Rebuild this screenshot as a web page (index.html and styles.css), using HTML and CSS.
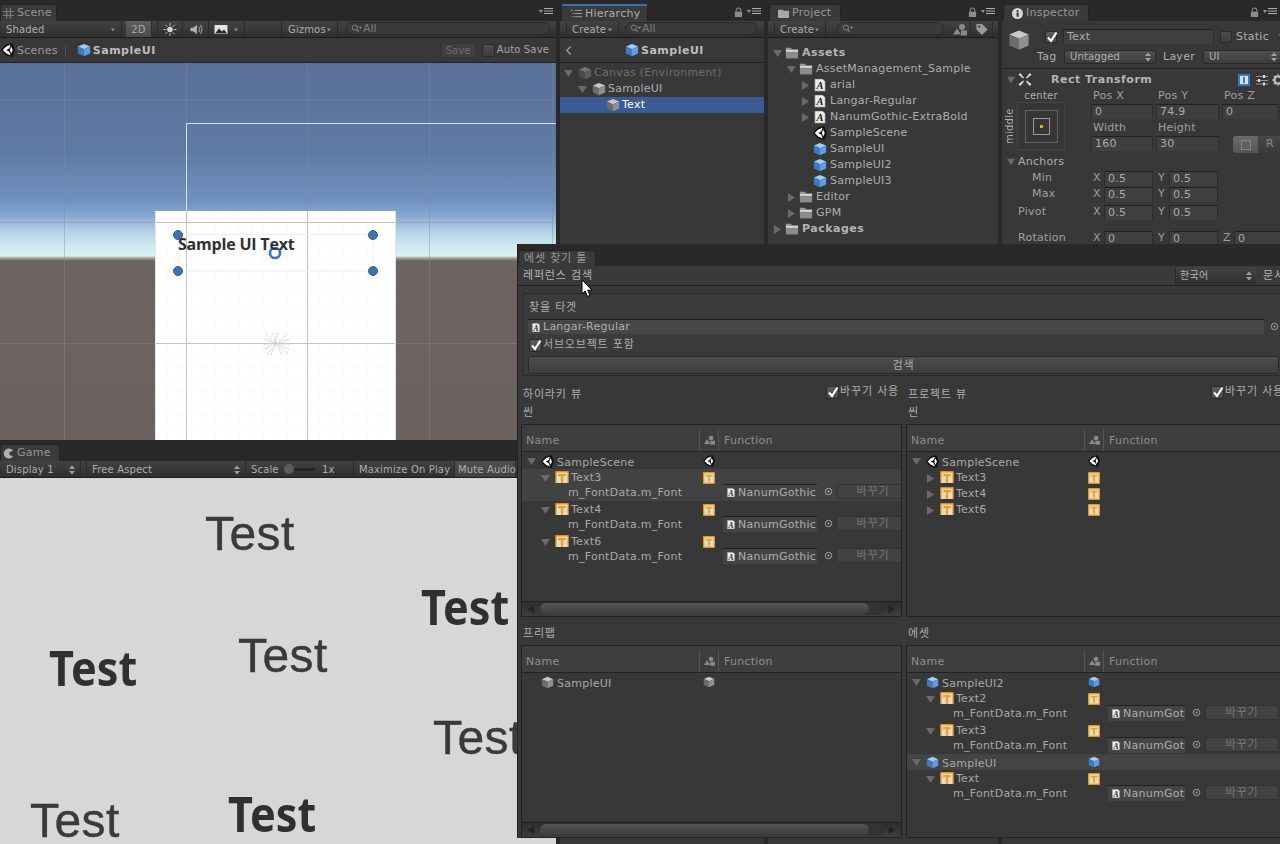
FILE: index.html
```html
<!DOCTYPE html>
<html lang="ko">
<head>
<meta charset="utf-8">
<title>Unity Editor</title>
<link rel="stylesheet" href="styles.css">
</head>
<body>
<svg class="sprite" aria-hidden="true">
  <defs>
    <symbol id="cube-blue" viewBox="0 0 16 16"><polygon points="8,1 15,4 8,7 1,4" fill="#a4cdf2"/><polygon points="1,4 8,7 8,15 1,12" fill="#3d7ac4"/><polygon points="8,7 15,4 15,12 8,15" fill="#5f9ce2"/></symbol>
    <symbol id="cube-grey" viewBox="0 0 16 16"><polygon points="8,1 15,4 8,7 1,4" fill="#c8c8c8"/><polygon points="1,4 8,7 8,15 1,12" fill="#6c6c6c"/><polygon points="8,7 15,4 15,12 8,15" fill="#909090"/></symbol>
    <symbol id="cube-dim" viewBox="0 0 16 16"><polygon points="8,1 15,4 8,7 1,4" fill="#757575"/><polygon points="1,4 8,7 8,15 1,12" fill="#4a4a4a"/><polygon points="8,7 15,4 15,12 8,15" fill="#5c5c5c"/></symbol>
    <symbol id="unity" viewBox="0 0 16 16"><polygon points="0,8 5,2 13,0 16,8 13,16 5,14" fill="#111"/><polygon points="2,8 6,4 11,2 9.5,6 6,8 9.5,10 11,14 6,12" fill="#fff"/><polygon points="11.5,4 13.5,8 11.5,12 10.5,9 10.5,7" fill="#fff"/></symbol>
    <symbol id="t" viewBox="0 0 16 16"><rect x="1" y="1" width="14" height="14" fill="#dcdcdc" stroke="#f5a20f" stroke-width="1.6"/><polygon points="3.5,3.5 12.5,3.5 12.5,6 9.3,6 9.3,13 6.7,13 6.7,6 3.5,6" fill="#f5a20f"/></symbol>
    <symbol id="t-cut" viewBox="0 0 16 14"><rect x="1" y="1" width="14" height="15" fill="#dcdcdc" stroke="#f5a20f" stroke-width="1.6"/><polygon points="3.5,3.5 12.5,3.5 12.5,6 9.3,6 9.3,14 6.7,14 6.7,6 3.5,6" fill="#f5a20f"/></symbol>
    <symbol id="font" viewBox="0 0 16 16"><polygon points="2,1 11,1 14,4 14,15 2,15" fill="#ececec" stroke="#555" stroke-width=".6"/><text x="8" y="13" text-anchor="middle" font-family="Liberation Serif" font-style="italic" font-weight="bold" font-size="12" fill="#222">A</text></symbol>
    <symbol id="folder" viewBox="0 0 16 16"><polygon points="1,4 1,2 7,2 8,4" fill="#9a9a9a"/><rect x="1" y="4" width="14" height="3" fill="#d0d0d0"/><rect x="1" y="7" width="14" height="7" fill="#8c8c8c"/><rect x="1" y="14" width="14" height="1" fill="#5c5c5c"/></symbol>
    <symbol id="down" viewBox="0 0 10 10"><polygon points="0,1 10,1 5,9" fill="currentColor"/></symbol>
    <symbol id="right" viewBox="0 0 10 10"><polygon points="1,0 9,5 1,10" fill="currentColor"/></symbol>
    <symbol id="lock" viewBox="0 0 10 12"><rect x="1" y="5" width="8" height="6" fill="#8c8c8c"/><path d="M2.5 5V3.5a2.5 2.5 0 0 1 5 0V5" fill="none" stroke="#8c8c8c" stroke-width="1.2"/></symbol>
    <symbol id="menu" viewBox="0 0 14 8"><polygon points="0,3 4,3 2,6" fill="#9a9a9a"/><rect x="5" y="1" width="9" height="1" fill="#b0b0b0"/><rect x="5" y="3.5" width="9" height="1" fill="#b0b0b0"/><rect x="5" y="6" width="9" height="1" fill="#b0b0b0"/></symbol>
    <symbol id="check" viewBox="0 0 12 12"><path d="M2 6.5 5 10 10.5 1.5" fill="none" stroke="#fff" stroke-width="2.2"/></symbol>
    <symbol id="updown" viewBox="0 0 6 10"><polygon points="0,4 6,4 3,0.5" fill="#a0a0a0"/><polygon points="0,6 6,6 3,9.5" fill="#a0a0a0"/></symbol>
    <symbol id="target" viewBox="0 0 10 10"><circle cx="5" cy="5" r="3.6" fill="none" stroke="#aaa"/><circle cx="5" cy="5" r="1.1" fill="#aaa"/></symbol>
    <symbol id="mag" viewBox="0 0 14 10"><circle cx="4.5" cy="4" r="3" fill="none" stroke="#8a8a8a" stroke-width="1.1"/><path d="M6.5 6 9 9" stroke="#8a8a8a" stroke-width="1.2"/><polygon points="9,3 13,3 11,6" fill="#8a8a8a"/></symbol>
    <symbol id="person" viewBox="0 0 14 12"><circle cx="9" cy="3.5" r="3" fill="#8a8a8a"/><polygon points="0,11 4,5 8,11" fill="#8a8a8a"/><rect x="8" y="7" width="6" height="5" fill="#8a8a8a"/></symbol>
    <symbol id="tag" viewBox="0 0 14 14"><polygon points="1,1 7,1 13,7 7,13 1,7" fill="#9a9a9a"/><circle cx="4" cy="4" r="1.2" fill="#383838"/></symbol>
  </defs>
</svg>

<div class="editor">
  <div class="col-left">
    <section class="scene">
      <div class="tabbar">
        <div class="tab tab-scene">
          <svg class="tab-ico" viewBox="0 0 12 12"><path d="M4 0V12M8 0V12M0 4H12M0 8H12" stroke="#8a8a8a" fill="none"/></svg>
          <span>Scene</span>
        </div>
        <svg class="ico-menu"><use href="#menu"/></svg>
      </div>
      <div class="toolbar">
        <div class="tb-cell w-shaded"><span>Shaded</span><svg class="mini-down"><use href="#down"/></svg></div>
        <div class="tb-cell w-2d">2D</div>
        <div class="tb-cell w-sun">
          <svg class="tb-ico" viewBox="0 0 14 14"><circle cx="7" cy="7" r="3" fill="#d8d8d8"/><path d="M7 0V3M7 11V14M0 7H3M11 7H14M2 2 4 4M10 10 12 12M2 12 4 10M10 4 12 2" stroke="#c8c8c8"/></svg>
        </div>
        <div class="tb-cell w-audio">
          <svg class="tb-ico" viewBox="0 0 14 14"><polygon points="1,5 4,5 8,2 8,12 4,9 1,9" fill="#b0b0b0"/><path d="M10 4Q12 7 10 10M12 2Q15 7 12 12" stroke="#b0b0b0" fill="none"/></svg>
        </div>
        <div class="tb-cell w-image">
          <svg class="tb-ico" viewBox="0 0 14 12"><rect x="0.5" y="1.5" width="13" height="9" fill="#e4e4e4"/><polygon points="1,10 5,5 8,8 10,6 13,10" fill="#2a2a2a"/></svg>
          <svg class="mini-down"><use href="#down"/></svg>
        </div>
        <div class="tb-cell w-blank"></div>
        <div class="tb-cell w-gizmos"><span>Gizmos</span><svg class="mini-down"><use href="#down"/></svg></div>
        <div class="pill pill-scene"><svg class="mag"><use href="#mag"/></svg><span>All</span></div>
      </div>
      <div class="crumbs">
        <svg class="ico"><use href="#unity"/></svg>
        <span class="crumb-scenes">Scenes</span>
        <span class="crumb-sep"></span>
        <svg class="ico"><use href="#cube-blue"/></svg>
        <strong class="crumb-name">SampleUI</strong>
        <button class="btn-save">Save</button>
        <span class="cb cb-empty"></span>
        <span class="crumb-auto">Auto Save</span>
      </div>
      <div class="viewport">
        <svg class="viewport-art" width="556" height="377" viewBox="0 63 556 377">
          <defs>
            <linearGradient id="sky" x1="0" y1="63" x2="0" y2="440" gradientUnits="userSpaceOnUse">
              <stop offset="0" stop-color="#5a7097"/>
              <stop offset=".23" stop-color="#5e7aa4"/>
              <stop offset=".363" stop-color="#7091bf"/>
              <stop offset=".403" stop-color="#84a6d0"/>
              <stop offset=".448" stop-color="#b6d3e6"/>
              <stop offset=".49" stop-color="#d0ebf0"/>
              <stop offset=".512" stop-color="#d9f1f2"/>
              <stop offset=".517" stop-color="#a8a49c"/>
              <stop offset=".525" stop-color="#6c6460"/>
              <stop offset="1" stop-color="#6a625e"/>
            </linearGradient>
          </defs>
          <rect x="0" y="63" width="556" height="377" fill="url(#sky)"/>
          <g stroke="#8a8a8a" stroke-opacity=".42">
            <path d="M64.5 63V440M186.5 63V123M307.5 63V440M429.5 63V440M552.5 63V440M0 100.5H556M0 222.5H556M0 343.5H556"/>
          </g>
          <path d="M186.5 211V123.5H556" fill="none" stroke="#d7dfea"/>
          <rect x="155" y="211" width="241" height="229" fill="#fff"/>
          <path d="M167.5 211V440M179.5 211V440M191.5 211V440M203.5 211V440M215.5 211V440M227.5 211V440M239.5 211V440M251.5 211V440M263.5 211V440M275.5 211V440M287.5 211V440M319.5 211V440M331.5 211V440M343.5 211V440M355.5 211V440M367.5 211V440M379.5 211V440M155 246.5H396M155 258.5H396M155 270.5H396M155 282.5H396M155 294.5H396M155 306.5H396M155 318.5H396M155 330.5H396M155 355.5H396M155 367.5H396M155 379.5H396M155 391.5H396M155 403.5H396M155 415.5H396M155 427.5H396" stroke="#fafafa"/>
          <path d="M186.5 211V440M307.5 211V440M155 222.5H396M155 343.5H396" stroke="#c4c4c4"/>
          <path d="M155.5 211V440M395.5 211V440" stroke="#e4e4e4"/>
          <path d="M178 234.5H373M178 271H373M178 235V271M373 235V271" stroke="#f0f0f0"/>
          <g stroke="#cfcfcf" stroke-dasharray="2 1" fill="none">
            <path d="M266 334 288 354M264 344H290M272 333 282 355M287 334 267 354M278 333 271 355M265 339 289 349M265 349 289 339"/>
          </g>
          <g class="handles">
            <circle cx="178" cy="235" r="4.5"/>
            <circle cx="373" cy="235" r="4.5"/>
            <circle cx="178" cy="271" r="4.5"/>
            <circle cx="373" cy="271" r="4.5"/>
          </g>
          <circle cx="275" cy="253" r="5" fill="none" stroke="#3e75b7" stroke-width="2.6"/>
        </svg>
        <span class="sample-text">Sample UI Text</span>
      </div>
    </section>
    <section class="game">
      <div class="tabbar">
        <div class="tab tab-game">
          <svg class="tab-ico" viewBox="0 0 12 12"><path d="M11 3A5.5 5.5 0 1 0 11 9L7 7.5 V4.5Z" fill="#b0b0b0"/></svg>
          <span>Game</span>
        </div>
      </div>
      <div class="toolbar">
        <div class="tb-cell w-display"><span>Display 1</span><svg class="updown"><use href="#updown"/></svg></div>
        <div class="tb-cell w-aspect"><span>Free Aspect</span><svg class="updown"><use href="#updown"/></svg></div>
        <div class="tb-cell w-scale"><span class="scale-name">Scale</span><span class="slider"><span class="slider-knob"></span></span><span class="scale-val">1x</span></div>
        <div class="tb-cell w-max">Maximize On Play</div>
        <div class="tb-cell w-mute">Mute Audio</div>
      </div>
      <div class="game-view">
        <span class="gt t1">Test</span>
        <span class="gt t2">Test</span>
        <span class="gt t3">Test</span>
        <span class="gt t4">Test</span>
        <span class="gtb b1">Test</span>
        <span class="gtb b2">Test</span>
        <span class="gtb b3">Test</span>
      </div>
    </section>
  </div>

  <section class="col-hier">
    <div class="tabbar">
      <div class="tab tab-hier">
        <svg class="tab-ico" viewBox="0 0 12 10"><path d="M0 1.5H2M4 1.5H12M1.5 5H3M4 5H12M1.5 8.5H3M4 8.5H12" stroke="#a8a8a8" fill="none"/></svg>
        <span>Hierarchy</span>
      </div>
      <svg class="ico-lock"><use href="#lock"/></svg>
      <svg class="ico-menu"><use href="#menu"/></svg>
    </div>
    <div class="toolbar">
      <div class="tb-cell w-create"><span>Create</span><svg class="mini-down"><use href="#down"/></svg></div>
      <div class="pill pill-hier"><svg class="mag"><use href="#mag"/></svg><span>All</span></div>
    </div>
    <div class="crumbs crumbs-hier">
      <svg class="chev" viewBox="0 0 8 12"><path d="M6.5 1.5 2 6l4.5 4.5" fill="none" stroke="#9a9a9a" stroke-width="1.6"/></svg>
      <svg class="ico ico-center"><use href="#cube-blue"/></svg>
      <strong class="crumb-name">SampleUI</strong>
    </div>
    <div class="list list-hier">
      <div class="row l0 dim"><svg class="arrow"><use href="#down"/></svg><svg class="ico"><use href="#cube-dim"/></svg><span>Canvas (Environment)</span></div>
      <div class="row l1"><svg class="arrow"><use href="#down"/></svg><svg class="ico"><use href="#cube-grey"/></svg><span>SampleUI</span></div>
      <div class="row l2 selected"><span class="arrow"></span><svg class="ico"><use href="#cube-grey"/></svg><span>Text</span></div>
    </div>
  </section>

  <section class="col-proj">
    <div class="tabbar">
      <div class="tab tab-proj">
        <svg class="tab-ico" viewBox="0 0 12 10"><path d="M0 1H5L6 2H12V10H0Z" fill="#a8a8a8"/></svg>
        <span>Project</span>
      </div>
      <svg class="ico-lock"><use href="#lock"/></svg>
      <svg class="ico-menu"><use href="#menu"/></svg>
    </div>
    <div class="toolbar">
      <div class="tb-cell w-create w-create-proj"><span>Create</span><svg class="mini-down"><use href="#down"/></svg></div>
      <div class="pill pill-proj"><svg class="mag"><use href="#mag"/></svg></div>
      <div class="tb-cell w-filter"><svg class="tb-ico"><use href="#person"/></svg></div>
      <div class="tb-cell w-filter"><svg class="tb-ico"><use href="#tag"/></svg></div>
    </div>
    <div class="list list-proj">
      <div class="row l0 bold"><svg class="arrow"><use href="#down"/></svg><svg class="ico"><use href="#folder"/></svg><span>Assets</span></div>
      <div class="row l1"><svg class="arrow"><use href="#down"/></svg><svg class="ico"><use href="#folder"/></svg><span>AssetManagement_Sample</span></div>
      <div class="row l2"><svg class="arrow"><use href="#right"/></svg><svg class="ico"><use href="#font"/></svg><span>arial</span></div>
      <div class="row l2"><svg class="arrow"><use href="#right"/></svg><svg class="ico"><use href="#font"/></svg><span>Langar-Regular</span></div>
      <div class="row l2"><svg class="arrow"><use href="#right"/></svg><svg class="ico"><use href="#font"/></svg><span>NanumGothic-ExtraBold</span></div>
      <div class="row l2"><span class="arrow"></span><svg class="ico"><use href="#unity"/></svg><span>SampleScene</span></div>
      <div class="row l2"><span class="arrow"></span><svg class="ico"><use href="#cube-blue"/></svg><span>SampleUI</span></div>
      <div class="row l2"><span class="arrow"></span><svg class="ico"><use href="#cube-blue"/></svg><span>SampleUI2</span></div>
      <div class="row l2"><span class="arrow"></span><svg class="ico"><use href="#cube-blue"/></svg><span>SampleUI3</span></div>
      <div class="row l1"><svg class="arrow"><use href="#right"/></svg><svg class="ico"><use href="#folder"/></svg><span>Editor</span></div>
      <div class="row l1"><svg class="arrow"><use href="#right"/></svg><svg class="ico"><use href="#folder"/></svg><span>GPM</span></div>
      <div class="row l0 bold"><svg class="arrow"><use href="#right"/></svg><svg class="ico"><use href="#folder"/></svg><span>Packages</span></div>
    </div>
  </section>

  <section class="col-insp">
    <div class="tabbar">
      <div class="tab tab-insp">
        <svg class="tab-ico" viewBox="0 0 12 12"><circle cx="6" cy="6" r="6" fill="#d8d8d8"/><rect x="5" y="5" width="2.2" height="4.6" fill="#333"/><rect x="5" y="2.4" width="2.2" height="1.8" fill="#333"/></svg>
        <span>Inspector</span>
      </div>
      <svg class="ico-lock"><use href="#lock"/></svg>
      <svg class="ico-menu"><use href="#menu"/></svg>
    </div>
    <div class="insp-head">
      <svg class="insp-cube"><use href="#cube-grey"/></svg>
      <div class="insp-line">
        <span class="cb"><svg class="cb-check"><use href="#check"/></svg></span>
        <span class="field field-name">Text</span>
        <span class="cb cb-empty"></span>
        <span class="static-label">Static</span>
        <svg class="mini-down mini-down-big"><use href="#down"/></svg>
      </div>
      <div class="insp-line insp-line-tag">
        <span class="tag-label">Tag</span>
        <span class="dd dd-tag"><span>Untagged</span><svg class="updown"><use href="#updown"/></svg></span>
        <span class="layer-label">Layer</span>
        <span class="dd dd-layer"><span>UI</span><svg class="updown updown-layer"><use href="#updown"/></svg></span>
      </div>
    </div>
    <div class="comp-head">
      <svg class="arrow arrow-comp"><use href="#down"/></svg>
      <svg class="rt-ico" viewBox="0 0 16 16"><g fill="#d8d8d8"><polygon points="1,3 3,1 7,6 6,7"/><polygon points="15,3 13,1 9,6 10,7"/><polygon points="1,13 3,15 7,10 6,9"/><polygon points="15,13 13,15 9,10 10,9"/></g></svg>
      <strong class="comp-title">Rect Transform</strong>
      <svg class="comp-help" viewBox="0 0 12 12"><rect width="12" height="12" rx="1" fill="#3f78b8"/><rect x="2" y="2" width="8" height="8" fill="#cfe0f0"/><rect x="5" y="3" width="2" height="6" fill="#3f78b8"/></svg>
      <svg class="comp-sliders" viewBox="0 0 12 12"><path d="M0 2.5H12M0 6.5H12M0 10H12" stroke="#999"/><rect x="7" y="1" width="2" height="3" fill="#ddd"/><rect x="2" y="5" width="2" height="3" fill="#ddd"/><rect x="7" y="8.5" width="2" height="3" fill="#ddd"/></svg>
      <svg class="comp-gear" viewBox="0 0 12 12"><circle cx="6" cy="6" r="3.6" fill="none" stroke="#bdbdbd" stroke-width="2.4"/><path d="M6 0V12M0 6H12M1.8 1.8 10.2 10.2M1.8 10.2 10.2 1.8" stroke="#bdbdbd" stroke-width="1.2" stroke-dasharray="2 8"/></svg>
    </div>
    <div class="rt-grid">
      <div class="anchor-cell">
        <span class="anchor-top">center</span>
        <span class="anchor-side">middle</span>
        <span class="anchor-box"><span class="anchor-mid"><span class="anchor-dot"></span></span></span>
      </div>
      <span class="rt-label">Pos X</span><span class="rt-label">Pos Y</span><span class="rt-label">Pos Z</span>
      <span class="field">0</span><span class="field">74.9</span><span class="field">0</span>
      <span class="rt-label">Width</span><span class="rt-label">Height</span><span class="rt-label"></span>
      <span class="field">160</span><span class="field">30</span>
      <span class="rt-btns"><span class="rt-btn-a"><span class="rt-btn-dash"></span></span><span class="rt-btn-b">R</span></span>
    </div>
    <div class="rt-anchors"><svg class="arrow arrow-anchors"><use href="#down"/></svg><span>Anchors</span></div>
    <div class="xyz sub"><span class="xyz-name">Min</span><span>X</span><span class="field">0.5</span><span>Y</span><span class="field">0.5</span></div>
    <div class="xyz sub"><span class="xyz-name">Max</span><span>X</span><span class="field">0.5</span><span>Y</span><span class="field">0.5</span></div>
    <div class="xyz xyz-pivot"><span class="xyz-name">Pivot</span><span>X</span><span class="field">0.5</span><span>Y</span><span class="field">0.5</span></div>
    <div class="xyz xyz-rot"><span class="xyz-name">Rotation</span><span>X</span><span class="field">0</span><span>Y</span><span class="field">0</span><span>Z</span><span class="field">0</span></div>
  </section>
</div>

<section class="finder">
  <div class="finder-bar">
    <div class="tab tab-finder"><span>에셋 찾기 툴</span></div>
  </div>
  <div class="finder-tools">
    <span>레퍼런스 검색</span>
    <span class="lang-dd"><span>한국어</span><svg class="updown"><use href="#updown"/></svg></span>
    <span class="doc-btn">문서</span>
  </div>
  <div class="target-box">
    <div class="target-title">찾을 타겟</div>
    <div class="target-row">
      <span class="obj obj-wide"><svg class="obj-ico"><use href="#font"/></svg><span>Langar-Regular</span></span>
      <svg class="target-pick"><use href="#target"/></svg>
    </div>
    <label class="check-row"><span class="cb"><svg class="cb-check"><use href="#check"/></svg></span><span>서브오브젝트 포함</span></label>
    <div class="search-btn">검색</div>
  </div>

  <div class="results">
    <div class="res-col">
      <div class="res-title">
        <span>하이라키 뷰</span>
        <span class="use-check"><span class="cb"><svg class="cb-check"><use href="#check"/></svg></span><span>바꾸기 사용</span></span>
      </div>
      <div class="res-sub">씬</div>
      <div class="tree tree-top">
        <div class="tree-head"><span class="th-name">Name</span><span class="th-ico"><svg class="ico-person"><use href="#person"/></svg></span><span class="th-fn">Function</span></div>
        <div class="tree-body">
          <div class="trow"><div class="tname n0"><svg class="arrow"><use href="#down"/></svg><svg class="ico"><use href="#unity"/></svg><span class="cut">SampleScene</span></div><div class="tico"><svg class="ico"><use href="#unity"/></svg></div></div>
          <div class="hl">
            <div class="trow"><div class="tname n1"><svg class="arrow"><use href="#down"/></svg><svg class="ico ico-t"><use href="#t-cut"/></svg><span>Text3</span></div><div class="tico"><svg class="ico"><use href="#t"/></svg></div></div>
            <div class="trow"><div class="tname n2"><span>m_FontData.m_Font</span></div><div class="tico"></div><div class="tfn"><span class="obj"><svg class="obj-ico"><use href="#font"/></svg><span class="obj-txt">NanumGothic</span></span><svg class="target-pick"><use href="#target"/></svg><span class="replace">바꾸기</span></div></div>
          </div>
          <div class="trow"><div class="tname n1"><svg class="arrow"><use href="#down"/></svg><svg class="ico ico-t"><use href="#t-cut"/></svg><span>Text4</span></div><div class="tico"><svg class="ico"><use href="#t"/></svg></div></div>
          <div class="trow"><div class="tname n2"><span>m_FontData.m_Font</span></div><div class="tico"></div><div class="tfn"><span class="obj"><svg class="obj-ico"><use href="#font"/></svg><span class="obj-txt">NanumGothic</span></span><svg class="target-pick"><use href="#target"/></svg><span class="replace">바꾸기</span></div></div>
          <div class="trow"><div class="tname n1"><svg class="arrow"><use href="#down"/></svg><svg class="ico ico-t"><use href="#t-cut"/></svg><span>Text6</span></div><div class="tico"><svg class="ico"><use href="#t"/></svg></div></div>
          <div class="trow"><div class="tname n2"><span>m_FontData.m_Font</span></div><div class="tico"></div><div class="tfn"><span class="obj"><svg class="obj-ico"><use href="#font"/></svg><span class="obj-txt">NanumGothic</span></span><svg class="target-pick"><use href="#target"/></svg><span class="replace">바꾸기</span></div></div>
        </div>
        <div class="hscroll"><svg class="sb-arrow" viewBox="0 0 10 10"><polygon points="9,0 1,5 9,10" fill="#222"/></svg><span class="sb-track"><span class="sb-thumb"></span></span><svg class="sb-arrow" viewBox="0 0 10 10"><polygon points="1,0 9,5 1,10" fill="#222"/></svg></div>
      </div>
      <div class="res-title res-title-low"><span>프리팹</span></div>
      <div class="tree tree-bottom">
        <div class="tree-head"><span class="th-name">Name</span><span class="th-ico"><svg class="ico-person"><use href="#person"/></svg></span><span class="th-fn">Function</span></div>
        <div class="tree-body">
          <div class="trow"><div class="tname n0"><span class="arrow"></span><svg class="ico"><use href="#cube-grey"/></svg><span class="cut">SampleUI</span></div><div class="tico"><svg class="ico"><use href="#cube-grey"/></svg></div></div>
        </div>
        <div class="hscroll"><svg class="sb-arrow" viewBox="0 0 10 10"><polygon points="9,0 1,5 9,10" fill="#222"/></svg><span class="sb-track"><span class="sb-thumb"></span></span><svg class="sb-arrow" viewBox="0 0 10 10"><polygon points="1,0 9,5 1,10" fill="#222"/></svg></div>
      </div>
    </div>

    <div class="res-col res-col-right">
      <div class="res-title">
        <span>프로젝트 뷰</span>
        <span class="use-check"><span class="cb"><svg class="cb-check"><use href="#check"/></svg></span><span>바꾸기 사용</span></span>
      </div>
      <div class="res-sub">씬</div>
      <div class="tree tree-top">
        <div class="tree-head"><span class="th-name">Name</span><span class="th-ico"><svg class="ico-person"><use href="#person"/></svg></span><span class="th-fn">Function</span></div>
        <div class="tree-body">
          <div class="trow"><div class="tname n0"><svg class="arrow"><use href="#down"/></svg><svg class="ico"><use href="#unity"/></svg><span class="cut">SampleScene</span></div><div class="tico"><svg class="ico"><use href="#unity"/></svg></div></div>
          <div class="trow"><div class="tname n1"><svg class="arrow"><use href="#right"/></svg><svg class="ico ico-t"><use href="#t-cut"/></svg><span>Text3</span></div><div class="tico"><svg class="ico"><use href="#t"/></svg></div></div>
          <div class="trow"><div class="tname n1"><svg class="arrow"><use href="#right"/></svg><svg class="ico ico-t"><use href="#t-cut"/></svg><span>Text4</span></div><div class="tico"><svg class="ico"><use href="#t"/></svg></div></div>
          <div class="trow"><div class="tname n1"><svg class="arrow"><use href="#right"/></svg><svg class="ico ico-t"><use href="#t-cut"/></svg><span>Text6</span></div><div class="tico"><svg class="ico"><use href="#t"/></svg></div></div>
        </div>
      </div>
      <div class="res-title res-title-low"><span>에셋</span></div>
      <div class="tree tree-bottom">
        <div class="tree-head"><span class="th-name">Name</span><span class="th-ico"><svg class="ico-person"><use href="#person"/></svg></span><span class="th-fn">Function</span></div>
        <div class="tree-body">
          <div class="trow"><div class="tname n0"><svg class="arrow"><use href="#down"/></svg><svg class="ico"><use href="#cube-blue"/></svg><span class="cut">SampleUI2</span></div><div class="tico"><svg class="ico"><use href="#cube-blue"/></svg></div></div>
          <div class="trow"><div class="tname n1"><svg class="arrow"><use href="#down"/></svg><svg class="ico ico-t"><use href="#t-cut"/></svg><span>Text2</span></div><div class="tico"><svg class="ico"><use href="#t"/></svg></div></div>
          <div class="trow"><div class="tname n2"><span>m_FontData.m_Font</span></div><div class="tico"></div><div class="tfn"><span class="obj obj-short"><svg class="obj-ico"><use href="#font"/></svg><span class="obj-txt">NanumGothic</span></span><svg class="target-pick"><use href="#target"/></svg><span class="replace replace-long">바꾸기</span></div></div>
          <div class="trow"><div class="tname n1"><svg class="arrow"><use href="#down"/></svg><svg class="ico ico-t"><use href="#t-cut"/></svg><span>Text3</span></div><div class="tico"><svg class="ico"><use href="#t"/></svg></div></div>
          <div class="trow"><div class="tname n2"><span>m_FontData.m_Font</span></div><div class="tico"></div><div class="tfn"><span class="obj obj-short"><svg class="obj-ico"><use href="#font"/></svg><span class="obj-txt">NanumGothic</span></span><svg class="target-pick"><use href="#target"/></svg><span class="replace replace-long">바꾸기</span></div></div>
          <div class="hl hl-row">
            <div class="trow"><div class="tname n0"><svg class="arrow"><use href="#down"/></svg><svg class="ico"><use href="#cube-blue"/></svg><span class="cut">SampleUI</span></div><div class="tico"><svg class="ico"><use href="#cube-blue"/></svg></div></div>
          </div>
          <div class="trow"><div class="tname n1"><svg class="arrow"><use href="#down"/></svg><svg class="ico ico-t"><use href="#t-cut"/></svg><span>Text</span></div><div class="tico"><svg class="ico"><use href="#t"/></svg></div></div>
          <div class="trow"><div class="tname n2"><span>m_FontData.m_Font</span></div><div class="tico"></div><div class="tfn"><span class="obj obj-short"><svg class="obj-ico"><use href="#font"/></svg><span class="obj-txt">NanumGothic</span></span><svg class="target-pick"><use href="#target"/></svg><span class="replace replace-long">바꾸기</span></div></div>
        </div>
      </div>
    </div>
  </div>
</section>

<svg class="cursor" viewBox="0 0 12 19"><path d="M1 1V15L4.2 12 6.5 17.5 9 16.4 6.7 11.2H11Z" fill="#fff" stroke="#000"/></svg>
</body>
</html>
```

FILE: styles.css
```css
* { box-sizing: border-box; }
html, body { margin: 0; height: 100%; }
body {
  width: 1280px;
  height: 844px;
  overflow: hidden;
  position: relative;
  background: #292929;
  color: #aeaeae;
  font: 11px/16px "DejaVu Sans", "Noto Sans CJK KR", sans-serif;
  letter-spacing: .25px;
}
.sprite { position: absolute; width: 0; height: 0; }
svg { display: block; flex: none; }
strong { font-weight: 700; }

.editor { display: flex; gap: 4px; height: 844px; }
.col-left { width: 556px; display: flex; flex-direction: column; }
.col-hier { width: 204px; background: #383838; display: flex; flex-direction: column; }
.col-proj { width: 230px; background: #383838; display: flex; flex-direction: column; }
.col-insp { width: 278px; background: #383838; display: flex; flex-direction: column; overflow: hidden; }

.tabbar { height: 21px; flex: none; background: #292929; display: flex; align-items: flex-end; position: relative; }
.tab {
  height: 17px;
  display: flex;
  align-items: center;
  gap: 3px;
  padding: 0 6px 0 2px;
  background: #3a3a3a;
  border: 1px solid #242424;
  border-bottom: 0;
  border-radius: 3px 3px 0 0;
  color: #979797;
}
.tab-ico { width: 11px; height: 11px; }
.tab-scene { width: 57px; }
.tab-hier { margin-left: 1px; width: 87px; padding-left: 9px; border-top: 2px solid #3a72b0; color: #aeaeae; }
.tab-proj { margin-left: 1px; width: 72px; padding-left: 8px; }
.tab-insp { margin-left: 1px; width: 86px; padding-left: 8px; }
.tab-game { width: 60px; }
.ico-menu { width: 14px; height: 8px; margin: 0 3px 6px 0; }
.ico-lock { width: 9px; height: 11px; margin: 0 4px 3px auto; }
.scene .ico-menu { margin-left: auto; }

.toolbar {
  height: 17px;
  flex: none;
  display: flex;
  align-items: stretch;
  background: linear-gradient(#424242, #2f2f2f);
  border-bottom: 1px solid #1d1d1d;
  font-size: 10px;
  letter-spacing: .15px;
}
.tb-cell { display: flex; align-items: center; justify-content: space-between; padding: 1px 5px 0; border-right: 1px solid #2a2a2a; }
.w-shaded { width: 122px; padding-left: 6px; }
.w-2d { width: 26px; margin-left: 4px; background: linear-gradient(#5e5e5e, #4b4b4b); color: #a5a5a5; justify-content: center; }
.w-sun { width: 26px; margin-left: 5px; border-left: 1px solid #2a2a2a; justify-content: center; }
.w-audio { width: 26px; justify-content: center; }
.w-image { width: 36px; }
.w-blank { width: 37px; }
.w-gizmos { width: 56px; padding-left: 6px; }
.w-create { width: 53px; margin-left: 6px; border-left: 1px solid #2a2a2a; }
.w-create-proj { width: 52px; }
.w-filter { width: 22px; justify-content: center; padding: 0; }
.w-display { width: 81px; padding-left: 6px; }
.w-aspect { width: 160px; margin-left: 5px; border-left: 1px solid #2a2a2a; padding-left: 5px; }
.w-scale { width: 108px; padding-left: 5px; justify-content: flex-start; }
.w-max { width: 101px; padding-left: 5px; white-space: nowrap; }
.w-mute { width: 61px; background: linear-gradient(#505050, #414141); padding: 1px 2px 0 3px; white-space: nowrap; }
.mini-down { width: 6px; height: 4px; color: #8c8c8c; }
.mini-down-big { width: 8px; height: 6px; color: #a8a8a8; margin-left: 3px; }
.updown { width: 6px; height: 10px; }
.tb-ico { width: 14px; height: 13px; }
.scale-name { width: 33px; }
.slider { width: 31px; height: 3px; margin-right: 7px; border-radius: 2px; background: #262626; position: relative; }
.slider-knob { position: absolute; left: 0; top: -4px; width: 10px; height: 10px; border-radius: 50%; background: #5c5c5c; }

.pill {
  height: 13px;
  margin-top: 1px;
  display: flex;
  align-items: center;
  padding-left: 4px;
  border: 1px solid #2a2a2a;
  border-radius: 7px;
  background: #3a3a3a;
  font-size: 11px;
  letter-spacing: 0;
  color: #7c7c7c;
}
.pill-scene { width: 204px; margin-left: 8px; }
.pill-hier { width: 132px; margin-left: 6px; }
.pill-proj { width: 107px; margin-left: 11px; margin-right: 5px; }
.mag { width: 12px; height: 9px; }

.crumbs {
  height: 25px;
  flex: none;
  display: flex;
  align-items: center;
  background: #383838;
  border-bottom: 1px solid #222;
  padding-left: 1px;
}
.ico { width: 14px; height: 14px; }
.crumb-scenes { margin: 2px 0 0 2px; color: #9a9a9a; }
.crumb-sep { width: 1px; height: 10px; margin: 0 11px 0 7px; background: #555; }
.crumb-name { margin: 2px 0 0 2px; color: #bdbdbd; letter-spacing: .5px; }
.btn-save {
  margin-left: auto;
  width: 35px;
  height: 15px;
  padding: 0;
  border: 1px solid #333;
  border-radius: 2px;
  background: #404040;
  color: #6e6e6e;
  font: 10px/13px "DejaVu Sans", sans-serif;
  letter-spacing: .15px;
}
.crumbs .cb { margin-left: 6px; }
.crumb-auto { margin: 0 7px 0 2px; font-size: 10px; letter-spacing: .15px; color: #a5a5a5; }
.crumbs-hier { padding-left: 5px; }
.chev { width: 7px; height: 11px; }
.ico-center { margin-left: 53px; }

.cb {
  width: 13px;
  height: 13px;
  flex: none;
  position: relative;
  border: 1px solid #2a2a2a;
  border-radius: 2px;
  background: linear-gradient(#5d5d5d, #484848);
}
.cb-check { position: absolute; left: 0; top: -1px; width: 12px; height: 12px; }
.cb-empty { background: linear-gradient(#4c4c4c, #3e3e3e); }

.scene { height: 440px; display: flex; flex-direction: column; }
.viewport { height: 377px; position: relative; overflow: hidden; }
.viewport-art { position: absolute; left: 0; top: 0; }
.handles circle { fill: #3a74b8; stroke: #4e5968; stroke-width: 1; }
.sample-text {
  position: absolute;
  left: 178px;
  top: 171px;
  font: 700 16px/20px "Open Sans", sans-serif;
  letter-spacing: -.2px;
  color: #2f3133;
}

.game { flex: 1; display: flex; flex-direction: column; min-height: 0; }
.game-view { flex: 1; background: #d7d7d7; position: relative; overflow: hidden; }
.gt {
  position: absolute;
  font: 48px/40px "Liberation Sans", sans-serif;
  letter-spacing: .4px;
  color: #3a3a3a;
  -webkit-text-stroke: .4px #3a3a3a;
  filter: blur(.5px);
}
.gtb {
  position: absolute;
  font: 700 48px/40px "Noto Sans", sans-serif;
  letter-spacing: 0;
  color: #303030;
  filter: blur(.5px);
  transform: scaleX(.9);
  transform-origin: left center;
}
.t1 { left: 205px; top: 36px; }
.t2 { left: 238px; top: 158px; }
.t3 { left: 433px; top: 240px; }
.t4 { left: 30px; top: 323px; }
.b1 { left: 49px; top: 170px; }
.b2 { left: 421px; top: 109px; }
.b3 { left: 228px; top: 316px; }

.list { padding-top: 2px; }
.list-proj { padding-top: 7px; }
.row { height: 16px; display: flex; align-items: center; white-space: nowrap; color: #aeaeae; }
.row .arrow { width: 14px; height: 9px; color: #6a6a6a; padding-right: 5px; }
.row .ico { margin-right: 2px; }
.list-hier .l0 { padding-left: 4px; }
.list-hier .l1 { padding-left: 18px; }
.list-hier .l2 { padding-left: 32px; }
.list-proj .row .arrow { width: 12px; padding-right: 3px; }
.list-proj .row .ico { margin-right: 3px; }
.list-proj .l0 { padding-left: 5px; }
.list-proj .l1 { padding-left: 19px; }
.list-proj .l2 { padding-left: 33px; }
.dim { color: #6f6f6f; }
.bold { font-weight: 700; color: #b4b4b4; letter-spacing: .5px; }
.selected { background: #3a5b96; color: #fff; }

.field {
  display: block;
  height: 15px;
  line-height: 13px;
  padding-left: 3px;
  background: #3f3f3f;
  border-top: 1px solid #212121;
  border-left: 1px solid #2c2c2c;
  border-right: 1px solid #2c2c2c;
  color: #ababab;
  overflow: hidden;
}
.insp-head {
  height: 48px;
  flex: none;
  display: grid;
  grid-template-columns: 43px 1fr;
  grid-template-rows: 15px 15px;
  row-gap: 5px;
  padding-top: 8px;
  border-bottom: 1px solid #242424;
}
.insp-cube { grid-row: 1 / 3; width: 22px; height: 22px; margin-left: 6px; }
.insp-line { display: flex; align-items: center; gap: 6px; white-space: nowrap; }
.insp-line .cb { width: 12px; height: 12px; }
.static-label { margin-left: -2px; }
.field-name { width: 151px; line-height: 14px; }
.insp-line-tag { margin-left: -8px; gap: 0; }
.tag-label { width: 27px; }
.layer-label { width: 40px; margin-left: 7px; }
.dd {
  height: 14px;
  display: flex;
  align-items: center;
  justify-content: space-between;
  padding: 0 4px 0 5px;
  border: 1px solid #2a2a2a;
  border-radius: 3px;
  background: linear-gradient(#505050, #3c3c3c);
  font-size: 10px;
  letter-spacing: .15px;
  flex: none;
}
.dd-tag { width: 92px; }
.dd-layer { width: 87px; }
.updown-layer { margin-right: 8px; }
.comp-head { height: 19px; flex: none; display: flex; align-items: center; padding: 2px 0 0 4px; }
.comp-head .arrow-comp { width: 10px; height: 8px; color: #6a6a6a; }
.rt-ico { width: 16px; height: 15px; margin-left: 1px; }
.comp-title { margin-left: 18px; color: #b4b4b4; letter-spacing: .5px; }
.comp-help { width: 12px; height: 12px; margin-left: auto; }
.comp-sliders { width: 12px; height: 12px; margin-left: 6px; }
.comp-gear { width: 12px; height: 12px; margin: 0 -4px 0 4px; }

.rt-grid {
  flex: none;
  display: grid;
  grid-template-columns: 89px 65px 66px 60px;
  grid-template-rows: 16px 16px 16px 16px;
}
.rt-label { padding-left: 2px; color: #a0a0a0; }
.rt-grid .field { margin-right: 3px; }
.anchor-cell { grid-row: 1 / 5; position: relative; }
.anchor-top { position: absolute; left: 15px; top: 0; width: 48px; text-align: center; font-size: 10px; }
.anchor-side { position: absolute; left: 0; top: 14px; height: 48px; width: 16px; writing-mode: vertical-rl; transform: rotate(180deg); text-align: center; font-size: 10px; }
.anchor-box {
  position: absolute;
  left: 15px;
  top: 14px;
  width: 48px;
  height: 48px;
  display: flex;
  align-items: center;
  justify-content: center;
  border: 1px solid #444;
  background: #363636;
}
.anchor-mid {
  width: 17px;
  height: 17px;
  display: flex;
  align-items: center;
  justify-content: center;
  border: 1px solid #999;
  box-shadow: 0 0 0 7px #363636, 0 0 0 8px #666;
}
.anchor-dot { width: 3px; height: 3px; background: #f0a010; }
.rt-btns { display: flex; height: 17px; margin-left: 11px; }
.rt-btn-a { width: 25px; display: flex; align-items: center; justify-content: center; border-radius: 3px 0 0 3px; background: linear-gradient(#6a6a6a, #555); }
.rt-btn-dash { width: 10px; height: 10px; border: 1px dashed #8c8c8c; }
.rt-btn-b { width: 24px; text-align: center; background: linear-gradient(#484848, #3a3a3a); color: #888; }
.rt-anchors { height: 16px; margin-top: 2px; display: flex; align-items: center; padding-left: 4px; }
.arrow-anchors { width: 10px; height: 8px; color: #6a6a6a; margin-right: 2px; }
.xyz {
  height: 16px;
  display: grid;
  grid-template-columns: 91px 11px 49px 5px 11px 49px 5px 11px 60px;
  align-items: center;
  color: #a0a0a0;
}
.xyz-name { padding-left: 16px; }
.sub .xyz-name { padding-left: 30px; }
.xyz > span:nth-child(4) { grid-column: 5; }
.xyz > span:nth-child(5) { grid-column: 6; }
.xyz > span:nth-child(6) { grid-column: 8; }
.xyz > span:nth-child(7) { grid-column: 9; }
.xyz-pivot { margin-top: 2px; }
.xyz-rot { margin-top: 10px; }

.finder {
  position: absolute;
  left: 518px;
  top: 244px;
  width: 771px;
  height: 594px;
  display: flex;
  flex-direction: column;
  background: #383838;
  box-shadow: -1px 0 0 #222;
}
.finder-bar { height: 22px; flex: none; display: flex; align-items: flex-end; background: #292929; }
.tab-finder { width: 78px; height: 16px; padding-left: 5px; letter-spacing: .8px; }
.finder-tools {
  height: 20px;
  flex: none;
  display: flex;
  align-items: center;
  padding-left: 5px;
  background: #3a3a3a;
  border-bottom: 1px solid #232323;
  color: #b4b4b4;
  letter-spacing: .8px;
}
.lang-dd {
  margin-left: auto;
  width: 81px;
  height: 17px;
  display: flex;
  align-items: center;
  justify-content: space-between;
  padding: 0 4px;
  border-left: 1px solid #2a2a2a;
  background: linear-gradient(#434343, #303030);
  font-size: 10px;
  letter-spacing: .25px;
}
.doc-btn { width: 33px; padding-left: 7px; }
.target-box {
  margin: 7px 0 0 5px;
  width: 761px;
  height: 83px;
  flex: none;
  padding: 5px 4px 0;
  border: 1px solid #2b2b2b;
  background: #3b3b3b;
}
.target-title { height: 20px; padding: 1px 1px 0; letter-spacing: .8px; }
.target-row { display: flex; align-items: center; height: 15px; }
.obj {
  width: 94px;
  height: 16px;
  flex: none;
  display: flex;
  align-items: center;
  gap: 2px;
  padding-left: 3px;
  border-top: 1px solid #1f1f1f;
  background: #444;
  color: #aeaeae;
  overflow: hidden;
  white-space: nowrap;
}
.obj-wide { width: 736px; height: 15px; background: #474747; }
.obj-short { width: 77px; }
.obj-ico { width: 10px; height: 11px; }
.target-pick { width: 9px; height: 9px; margin-left: 6px; }
.check-row { display: flex; align-items: center; height: 16px; margin: 3px 0 3px 1px; gap: 1px; letter-spacing: .8px; }
.search-btn {
  height: 18px;
  line-height: 17px;
  text-align: center;
  border: 1px solid #2a2a2a;
  border-radius: 3px;
  background: linear-gradient(#4d4d4d, #3d3d3d);
  letter-spacing: .8px;
}
.results { display: grid; grid-template-columns: 381px 381px; column-gap: 4px; padding-left: 3px; }
.res-col { display: flex; flex-direction: column; }
.res-title { height: 18px; margin-top: 10px; padding-left: 2px; display: flex; justify-content: space-between; align-items: center; white-space: nowrap; letter-spacing: .8px; }
.res-title-low { height: 16px; margin-top: 9px; margin-bottom: 3px; }
.use-check { display: flex; align-items: center; gap: 1px; margin: -6px 3px 0 0; }
.res-sub { height: 16px; margin: 1px 0 3px; padding-left: 2px; }
.tree { display: flex; flex-direction: column; border: 1px solid #222; background: #383838; overflow: hidden; }
.tree-top { height: 193px; }
.tree-bottom { height: 193px; }
.tree-head {
  height: 27px;
  flex: none;
  display: grid;
  grid-template-columns: 177px 20px 1fr;
  background: #3e3e3e;
  border-bottom: 1px solid #222;
  color: #8e8e8e;
}
.th-name { padding: 8px 0 0 4px; }
.th-fn { padding: 8px 0 0 5px; }
.th-ico { margin-top: 4px; border-left: 1px solid #555; border-right: 1px solid #555; height: 22px; padding: 6px 0 0 4px; }
.ico-person { width: 11px; height: 10px; }
.tree-body { flex: 1; padding-top: 1px; min-height: 0; }
.trow { height: 16px; display: grid; grid-template-columns: 177px 20px 1fr; align-items: center; color: #a8a8a8; white-space: nowrap; }
.tname { display: flex; align-items: center; min-width: 0; }
.tname .arrow { width: 14px; height: 9px; padding-right: 5px; color: #6a6a6a; }
.tname .ico { width: 13px; height: 13px; margin-right: 3px; }
.tname .ico-t { width: 14px; height: 12px; margin: -2px 2px 0 0; }
.n0 { padding-left: 5px; }
.n1 { padding: 1px 0 0 19px; }
.n2 { padding-left: 46px; }
.cut { height: 12px; overflow: hidden; line-height: 14px; margin-top: 2px; }
.tico { padding-left: 3px; }
.tico .ico { width: 12px; height: 12px; margin-left: 1px; }
.tfn { display: flex; align-items: flex-start; align-self: start; height: 16px; margin-top: -1px; padding-left: 4px; }
.tfn .target-pick { margin: 3px 0 0 7px; }
.replace {
  width: 74px;
  height: 15px;
  line-height: 13px;
  margin-left: 3px;
  flex: none;
  text-align: center;
  border: 1px solid #323232;
  border-radius: 3px;
  background: #424242;
  color: #777;
  letter-spacing: .8px;
}
.replace-long { margin-left: 4px; }
.hl { background: #424242; }
.hl-row { background: #444; }
.hscroll {
  height: 15px;
  flex: none;
  display: flex;
  align-items: center;
  padding: 0 3px;
  background: linear-gradient(#2e2e2e, #3d3d3d);
  border-top: 1px solid #222;
}
.sb-arrow { width: 8px; height: 8px; margin: 0 2px; }
.sb-track { flex: 1; height: 12px; margin: 0 2px; padding-left: 1px; border-radius: 6px; background: #333; }
.sb-thumb { display: block; width: 329px; height: 12px; border-radius: 6px; background: linear-gradient(#565656, #3a3a3a); }

.cursor { position: absolute; left: 581px; top: 279px; width: 12px; height: 19px; }
```
